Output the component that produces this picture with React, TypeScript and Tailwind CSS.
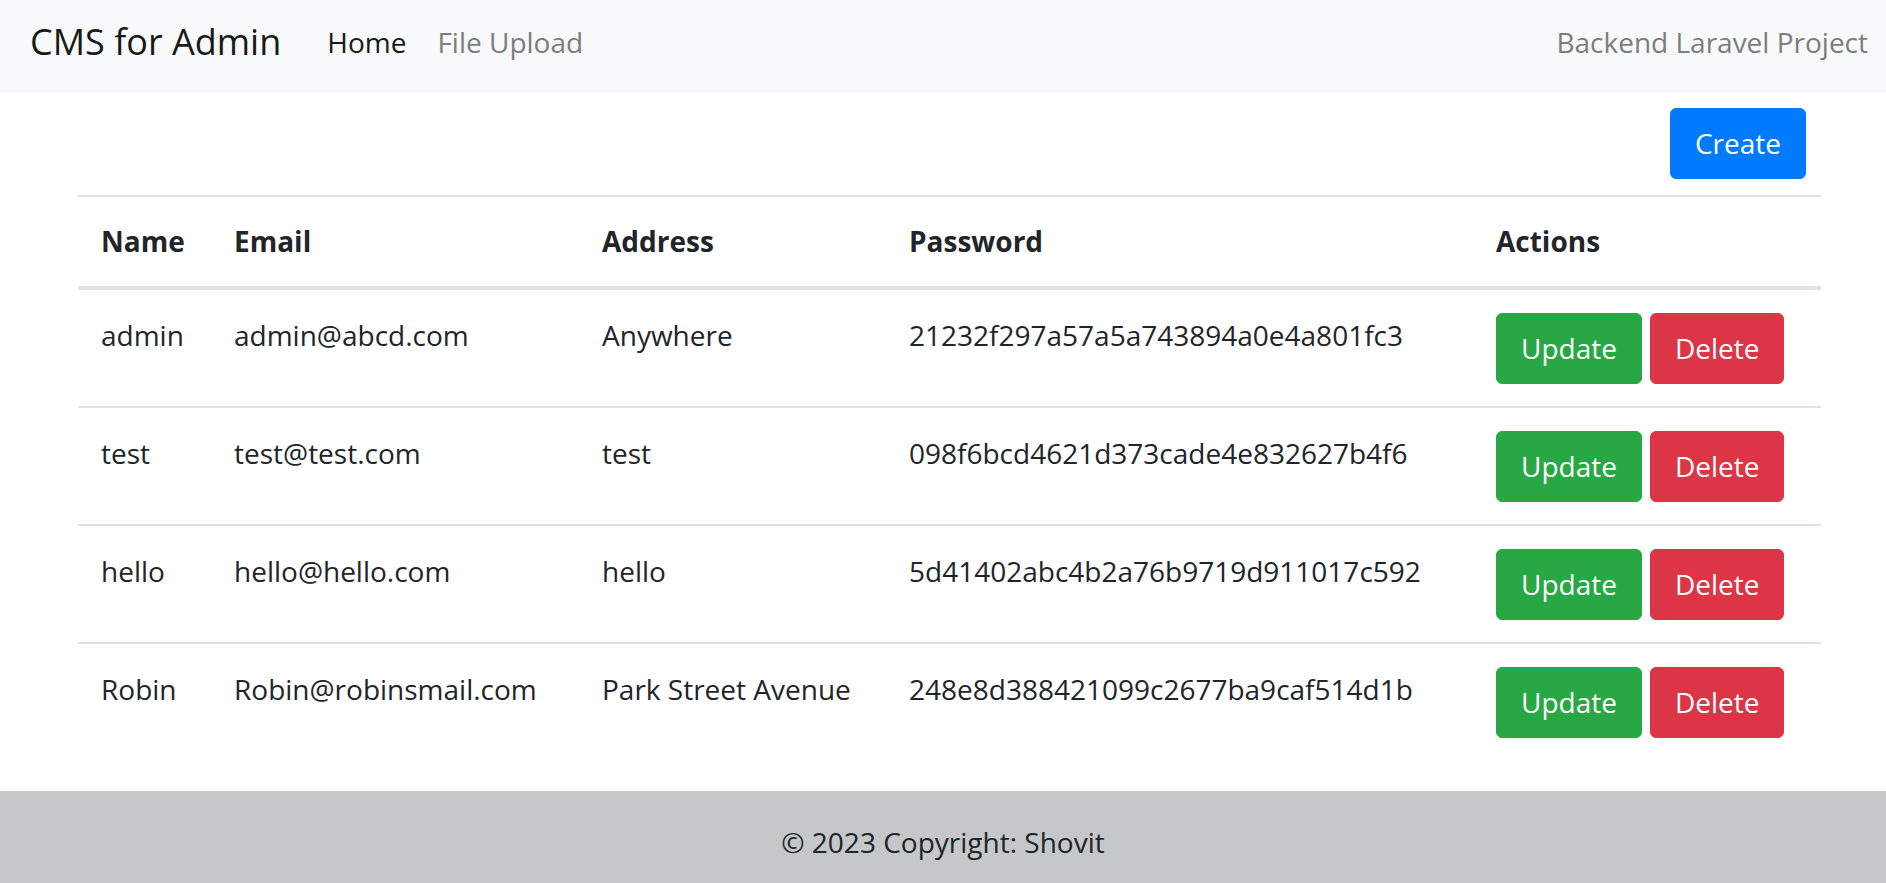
import { type ReactNode } from "react";

type User = {
  name: string;
  email: string;
  address: string;
  password: string;
};

const users: User[] = [
  { name: "admin", email: "admin@abcd.com", address: "Anywhere", password: "21232f297a57a5a743894a0e4a801fc3" },
  { name: "test", email: "test@test.com", address: "test", password: "098f6bcd4621d373cade4e832627b4f6" },
  { name: "hello", email: "hello@hello.com", address: "hello", password: "5d41402abc4b2a76b9719d911017c592" },
  { name: "Robin", email: "Robin@robinsmail.com", address: "Park Street Avenue", password: "248e8d388421099c2677ba9caf514d1b" },
];

const cols = "grid grid-cols-[133px_368px_307px_587px_1fr]";

const Cell = ({ children, head }: { children: ReactNode; head?: boolean }) => (
  <div className={head ? "px-[23px] font-bold leading-[45px]" : "px-[23px] leading-[45px]"}>
    {children}
  </div>
);

const Btn = ({ label, color }: { label: string; color: string }) => (
  <button
    className={`flex h-[71px] items-center rounded-[6px] border px-[24px] leading-[45px] text-white ${color}`}
  >
    {label}
  </button>
);

export default function App() {
  return (
    <div className="min-h-screen bg-white text-[28px] text-[#212529] [font-family:'Open_Sans',sans-serif]">
      <nav className="flex h-[93px] items-center bg-[#f8f9fa] pb-[10px] pl-[30px] pr-[18px]">
        <span className="text-[36px] leading-[52px] text-[#191919]">CMS for Admin</span>
        <a className="ml-[46px] leading-[42px] text-[#191919]">Home</a>
        <a className="ml-[31px] leading-[42px] text-[#7c7d7d]">File Upload</a>
        <a className="ml-auto leading-[42px] text-[#7c7d7d]">Backend Laravel Project</a>
      </nav>

      <main className="ml-[78px] w-[1743px] pb-[31px]">
        <div className="flex justify-end pr-[15px] pt-[15px]">
          <Btn label="Create" color="border-[#007bff] bg-[#007bff]" />
        </div>

        <div className="mt-[16px]">
          <div className={`${cols} border-b-4 border-t-2 border-[#dee2e6] py-[22px]`}>
            <Cell head>Name</Cell>
            <Cell head>Email</Cell>
            <Cell head>Address</Cell>
            <Cell head>Password</Cell>
            <Cell head>Actions</Cell>
          </div>
          {users.map((u, i) => (
            <div
              key={u.email}
              className={`${cols} border-[#dee2e6] pb-[22px] pt-[23px] ${i > 0 ? "border-t-2" : ""}`}
            >
              <Cell>{u.name}</Cell>
              <Cell>{u.email}</Cell>
              <Cell>{u.address}</Cell>
              <Cell>{u.password}</Cell>
              <div className="flex gap-[8px] px-[23px]">
                <Btn label="Update" color="border-[#28a745] bg-[#28a745]" />
                <Btn label="Delete" color="border-[#dc3545] bg-[#dc3545]" />
              </div>
            </div>
          ))}
        </div>
      </main>

      <footer className="bg-[#c6c7c8] py-[29px] text-center leading-[45px] text-[#212529]">
        © 2023 Copyright: Shovit
      </footer>
    </div>
  );
}
